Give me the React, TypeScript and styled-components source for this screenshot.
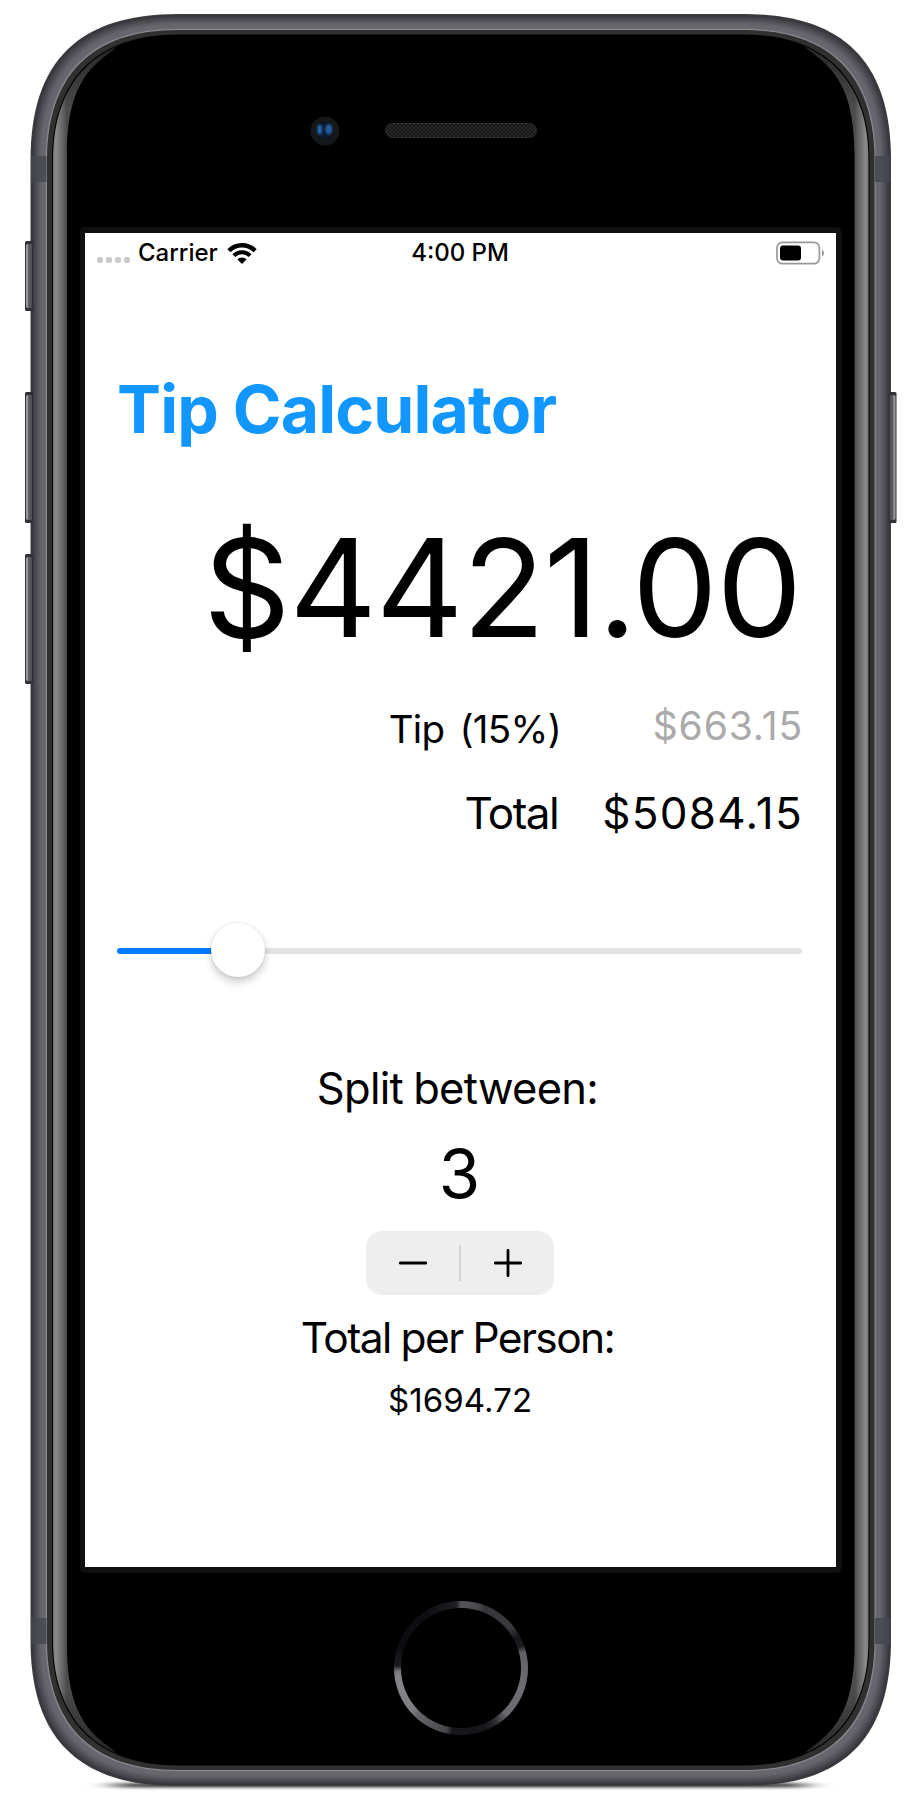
import React from "react";
import styled, { createGlobalStyle } from "styled-components";

const Reset = createGlobalStyle`
  *, *::before, *::after { box-sizing: border-box; }
  body { margin: 0; background: #fff; }
`;

const Device = styled.main`
  position: relative;
  display: flex;
  flex-direction: column;
  width: 920px;
  height: 1800px;
  overflow: hidden;
  font-family: Inter, "Liberation Sans", sans-serif;
  color: #000;
`;

const Casing = styled.svg`
  position: absolute;
  inset: 0;
`;

const TopBezel = styled.header`
  position: relative;
  display: flex;
  align-items: flex-start;
  gap: 45px;
  height: 227px;
  padding: 116px 0 0 310px;
`;

const Camera = styled.svg`
  width: 30px;
  height: 30px;
`;

const Speaker = styled.svg`
  width: 152px;
  height: 15px;
  margin-top: 7px;
`;

const Screen = styled.section`
  position: relative;
  display: flex;
  flex-direction: column;
  width: 762px;
  height: 1346px;
  margin-left: 80px;
  border: 6px solid #0f0f0f;
  border-left-width: 5px;
  border-radius: 5px;
`;

const Display = styled.div`
  display: flex;
  flex-direction: column;
  flex: 1;
  background: #fff;
`;

const StatusBar = styled.div`
  display: grid;
  grid-template-columns: 1fr auto 1fr;
  align-items: center;
  height: 40px;
  padding: 0 11px 0 12px;
  font-size: 24px;
  font-weight: 500;
  line-height: 40px;
`;

const StatusGroup = styled.div<{ $end?: boolean }>`
  display: flex;
  align-items: center;
  justify-content: ${(p) => (p.$end ? "flex-end" : "flex-start")};
`;

const SignalDots = styled.div`
  display: flex;
  gap: 3px;
  margin: 14px 8px 0 0;
`;

const Dot = styled.span`
  width: 6px;
  height: 6px;
  border-radius: 2px;
  background: #cacaca;
`;

const StatusText = styled.span`
  height: 40px;
  white-space: nowrap;
`;

const Clock = styled(StatusText)`
  margin-left: -2px;
`;

const WifiIcon = styled.svg`
  width: 30px;
  height: 22px;
  margin-left: 9px;
`;

const BatteryIcon = styled.svg`
  width: 49px;
  height: 24px;
`;

const Title = styled.h1`
  margin: 96px 0 0 32px;
  font-size: 66px;
  font-weight: 700;
  line-height: 80px;
  letter-spacing: -0.85px;
  color: #1197ff;
`;

const Bill = styled.div`
  margin: 59px 35px 0 0;
  font-size: 136px;
  line-height: 160px;
  letter-spacing: -1.36px;
  text-align: right;
`;

const Summary = styled.dl`
  display: grid;
  grid-template-columns: 1fr 245px;
  row-gap: 32px;
  margin: 35px 33px 0 0;
  line-height: 52px;
  text-align: right;
`;

const TipLabel = styled.dt`
  margin-right: -3px;
  font-size: 38.5px;
  letter-spacing: -0.7px;
  word-spacing: -2.5px;
  white-space: pre;
`;

const TipAmount = styled.dd`
  margin: -3px 0 3px;
  font-size: 39px;
  letter-spacing: 0.9px;
  color: #aaa;
`;

const TotalLabel = styled.dt`
  font-size: 44px;
  letter-spacing: -1.54px;
`;

const TotalAmount = styled.dd`
  margin: 0;
  font-size: 44px;
  letter-spacing: 1.3px;
`;

const Slider = styled.div`
  display: flex;
  align-items: center;
  height: 54px;
  margin: 84px 34px 0 32px;
`;

const Track = styled.div<{ $filled?: boolean }>`
  flex: ${(p) => (p.$filled ? "0 0 121px" : "1")};
  height: 6px;
  margin-top: 2px;
  border-radius: ${(p) => (p.$filled ? "3px 0 0 3px" : "0 3px 3px 0")};
  background: ${(p) => (p.$filled ? "#007aff" : "#e3e3e4")};
`;

const Thumb = styled.div`
  z-index: 1;
  width: 54px;
  height: 54px;
  margin: 0 -27px;
  border-radius: 50%;
  background: #fff;
  box-shadow: 0 5px 9px rgba(0, 0, 0, 0.2), 0 0 3px rgba(0, 0, 0, 0.12);
`;

const Split = styled.div`
  display: flex;
  flex-direction: column;
  align-items: center;
  padding: 85px 1px 0 0;
`;

const SplitCaption = styled.div`
  padding-right: 5px;
  font-size: 43.5px;
  line-height: 52px;
  letter-spacing: -0.7px;
  word-spacing: -1.5px;
`;

const PeopleCount = styled.div`
  margin-top: 20px;
  padding-right: 1px;
  font-size: 67px;
  line-height: 80px;
`;

const Stepper = styled.div`
  display: flex;
  align-items: center;
  width: 188px;
  height: 64px;
  margin: 17px 0;
  border-radius: 16px;
  background: #eee;
`;

const StepButton = styled.button`
  display: flex;
  flex: 1;
  align-items: center;
  justify-content: center;
  padding: 0;
  border: 0;
  background: none;
`;

const StepDivider = styled.span`
  width: 2px;
  height: 36px;
  background: #d4d4d4;
`;

const ShareCaption = styled.div`
  padding-right: 5px;
  font-size: 42.5px;
  line-height: 52px;
  letter-spacing: -1.6px;
  word-spacing: -0.5px;
`;

const ShareAmount = styled.div`
  margin-top: 16px;
  font-size: 33px;
  line-height: 40px;
  letter-spacing: 0.08px;
`;

const HomeButton = styled.div`
  position: relative;
  align-self: flex-start;
  width: 134px;
  height: 134px;
  margin: 28px 0 0 394px;
  padding: 7px;
  border-radius: 50%;
  background: conic-gradient(
    #55545a 0deg, #4c4b50 14deg, #36353a 22deg, #3a393e 50deg, #16151a 62deg,
    #1c1b20 70deg, #626167 76deg, #6e6d73 110deg, #6b6a70 135deg, #2a292e 148deg,
    #16151a 158deg, #17161b 188deg, #47464b 193deg, #66656b 222deg, #7f7e84 230deg,
    #85848a 262deg, #77767c 267deg, #1b1a1f 272deg, #0c0b10 290deg, #0e0d12 325deg,
    #1b1a1f 350deg, #222126 356deg, #55545a 360deg
  );
`;

const HomeFace = styled.div`
  width: 120px;
  height: 120px;
  border-radius: 50%;
  background: #000;
`;

type Contour = { x: number; y: number; cy: number; cx: number };

const outer: Contour = { x: 30.5, y: 14, cy: 60, cx: 80 };
const inner: Contour = { x: 47, y: 30, cy: 75, cx: 92 };
const glass: Contour = { x: 52, y: 34.5, cy: 80, cx: 96 };
const face: Contour = { x: 53, y: 35.5, cy: 81, cx: 97 };

const mix = (a: number, b: number, t: number) => a + (b - a) * t;

const blend = (a: Contour, b: Contour, t: number): Contour => ({
  x: mix(a.x, b.x, t),
  y: mix(a.y, b.y, t),
  cy: mix(a.cy, b.cy, t),
  cx: mix(a.cx, b.cx, t),
});

const W = 921.5;
const H = 1800;

const contourPath = ({ x, y, cy, cx }: Contour) =>
  `M${x} 160C${x} ${cy} ${cx} ${y} 178 ${y}H${W - 178}` +
  `C${W - cx} ${y} ${W - x} ${cy} ${W - x} 160V${H - 160}` +
  `C${W - x} ${H - cy} ${W - cx} ${H - y} ${W - 178} ${H - y}H178` +
  `C${cx} ${H - y} ${x} ${H - cy} ${x} ${H - 160}Z`;

const rimShades = [
  "#3c3b40", "#38373c", "#3d3c42", "#434248", "#48474d", "#4e4d53", "#535258", "#58575e",
  "#5d5c63", "#616067", "#65646b", "#67666d", "#68676e", "#66656c", "#6f6e75", "#8b8a90",
];

const shinePath =
  "M50 160V30H119L117 46L113 50C88 68 67 88 67 155V1645C67 1712 88 1732 113 1750L117 1754L119 1770H50Z";

function SideButton({ y, height }: { y: number; height: number }) {
  return (
    <g>
      <rect x="25" y={y} width="8" height={height} rx="1.5" fill="#323136" />
      <rect x="26" y={y + 3} width="6.5" height={height - 6} rx="2" fill="url(#button)" />
      <rect x="32" y={y + 3} width="1" height={height - 6} fill="#2d2c31" />
    </g>
  );
}

function PhoneCasing() {
  return (
    <Casing width="920" height="1800" viewBox="0 0 920 1800" aria-hidden="true">
      <defs>
        <linearGradient id="button">
          <stop offset="0" stopColor="#a09fa5" />
          <stop offset="0.25" stopColor="#98979d" />
          <stop offset="0.4" stopColor="#5c5b61" />
          <stop offset="1" stopColor="#4d4c52" />
        </linearGradient>
        <linearGradient id="shine" gradientUnits="userSpaceOnUse" x1="53" x2="67" y1="0" y2="0">
          <stop offset="0" stopColor="#747474" />
          <stop offset="0.2" stopColor="#8b8b8b" />
          <stop offset="1" stopColor="#4b4b4b" />
        </linearGradient>
        <linearGradient id="fade" gradientUnits="userSpaceOnUse" x1="0" x2="0" y1="40" y2="1760">
          <stop offset="0" stopColor="#000" stopOpacity="0.55" />
          <stop offset="0.04" stopColor="#000" stopOpacity="0" />
          <stop offset="0.96" stopColor="#000" stopOpacity="0" />
          <stop offset="1" stopColor="#000" stopOpacity="0.55" />
        </linearGradient>
        <clipPath id="face">
          <path d={contourPath(face)} />
        </clipPath>
        <filter id="soft" x="-10%" y="-200%" width="120%" height="500%">
          <feGaussianBlur stdDeviation="14 1.4" />
        </filter>
      </defs>
      <rect x="115" y="1783" width="690" height="4.5" fill="#000" opacity="0.75" filter="url(#soft)" />
      {rimShades.map((shade, i) => (
        <path key={i} d={contourPath(blend(outer, inner, i / rimShades.length))} fill={shade} />
      ))}
      {[156, 1618].map((y) => (
        <g key={y} fill="#43494e" opacity="0.8">
          <rect x="31" y={y} width="15.5" height="26" />
          <rect x={W - 46.5} y={y} width="15.5" height="26" />
        </g>
      ))}
      <path d={contourPath(inner)} fill="#303030" />
      <path d={contourPath(glass)} fill="#000" />
      <g clipPath="url(#face)">
        {[undefined, `matrix(-1 0 0 1 ${W} 0)`].map((transform, i) => (
          <g key={i} transform={transform}>
            <path d={shinePath} fill="url(#shine)" />
            <path d={shinePath} fill="url(#fade)" />
          </g>
        ))}
      </g>
      <SideButton y={241} height={70} />
      <SideButton y={392} height={131} />
      <SideButton y={554} height={130} />
      <g transform={`matrix(-1 0 0 1 ${W} 0)`}>
        <SideButton y={392} height={131} />
      </g>
    </Casing>
  );
}

export default function App() {
  return (
    <>
      <Reset />
      <Device>
        <PhoneCasing />
        <TopBezel>
          <Camera viewBox="0 0 30 30" aria-hidden="true">
            <defs>
              <radialGradient id="lens">
                <stop offset="0" stopColor="#0c1a30" />
                <stop offset="0.7" stopColor="#0c1b33" />
                <stop offset="1" stopColor="#0b111b" />
              </radialGradient>
              <filter id="glow" x="-50%" y="-50%" width="200%" height="200%">
                <feGaussianBlur stdDeviation="0.9" />
              </filter>
            </defs>
            <circle cx="15" cy="15" r="14.5" fill="#151718" />
            <circle cx="14.8" cy="14.8" r="8.8" fill="url(#lens)" />
            <ellipse cx="9.6" cy="13.5" rx="2.2" ry="5" fill="#2a6db0" filter="url(#glow)" />
            <ellipse cx="18.9" cy="13.3" rx="3.4" ry="5.2" fill="#235f9e" filter="url(#glow)" />
          </Camera>
          <Speaker viewBox="0 0 152 15" aria-hidden="true">
            <defs>
              <pattern id="mesh" width="4" height="4" patternUnits="userSpaceOnUse">
                <rect width="4" height="4" fill="#171717" />
                <circle cx="1" cy="1" r="0.8" fill="#3d3d3d" />
                <circle cx="3" cy="3" r="0.8" fill="#3d3d3d" />
              </pattern>
            </defs>
            <rect x="0.5" y="0.5" width="151" height="14" rx="7" fill="url(#mesh)" stroke="#2b2b2b" />
          </Speaker>
        </TopBezel>
        <Screen>
          <Display>
            <StatusBar>
              <StatusGroup>
                <SignalDots><Dot /><Dot /><Dot /><Dot /></SignalDots>
                <StatusText>Carrier</StatusText>
                <WifiIcon viewBox="0 0 30 22" aria-hidden="true">
                  <g fill="none" stroke="#000">
                    <path d="M1.9 8.8A18.2 18.2 0 0 1 28.1 8.8" strokeWidth="4.5" />
                    <path d="M6.9 13.6A11.4 11.4 0 0 1 23.1 13.6" strokeWidth="4.1" />
                  </g>
                  <path d="M15 22L10.3 17.3A6.8 6.8 0 0 1 19.7 17.3Z" />
                </WifiIcon>
              </StatusGroup>
              <Clock>4:00 PM</Clock>
              <StatusGroup $end>
                <BatteryIcon viewBox="0 0 49 24" aria-hidden="true">
                  <rect x="1" y="1.3" width="42.4" height="21.4" rx="5.5" fill="none" stroke="#999" strokeWidth="1.7" />
                  <rect x="4" y="4.5" width="21" height="15" rx="3" />
                  <path d="M46 8.5Q48 9.5 48 12T46 15.5Z" fill="#999" />
                </BatteryIcon>
              </StatusGroup>
            </StatusBar>
            <Title>Tip Calculator</Title>
            <Bill>$4421.00</Bill>
            <Summary>
              <TipLabel>{"Tip  (15%)"}</TipLabel>
              <TipAmount>$663.15</TipAmount>
              <TotalLabel>Total</TotalLabel>
              <TotalAmount>$5084.15</TotalAmount>
            </Summary>
            <Slider>
              <Track $filled />
              <Thumb />
              <Track />
            </Slider>
            <Split>
              <SplitCaption>Split between:</SplitCaption>
              <PeopleCount>3</PeopleCount>
              <Stepper>
                <StepButton aria-label="Decrease">
                  <svg width="28" height="28" viewBox="0 0 28 28">
                    <path d="M1.3 14H26.7" stroke="#000" strokeWidth="2.8" strokeLinecap="round" />
                  </svg>
                </StepButton>
                <StepDivider />
                <StepButton aria-label="Increase">
                  <svg width="28" height="28" viewBox="0 0 28 28">
                    <path d="M1.3 14H26.7M14 1.3V26.7" stroke="#000" strokeWidth="2.8" strokeLinecap="round" />
                  </svg>
                </StepButton>
              </Stepper>
              <ShareCaption>Total per Person:</ShareCaption>
              <ShareAmount>$1694.72</ShareAmount>
            </Split>
          </Display>
        </Screen>
        <HomeButton><HomeFace /></HomeButton>
      </Device>
    </>
  );
}
